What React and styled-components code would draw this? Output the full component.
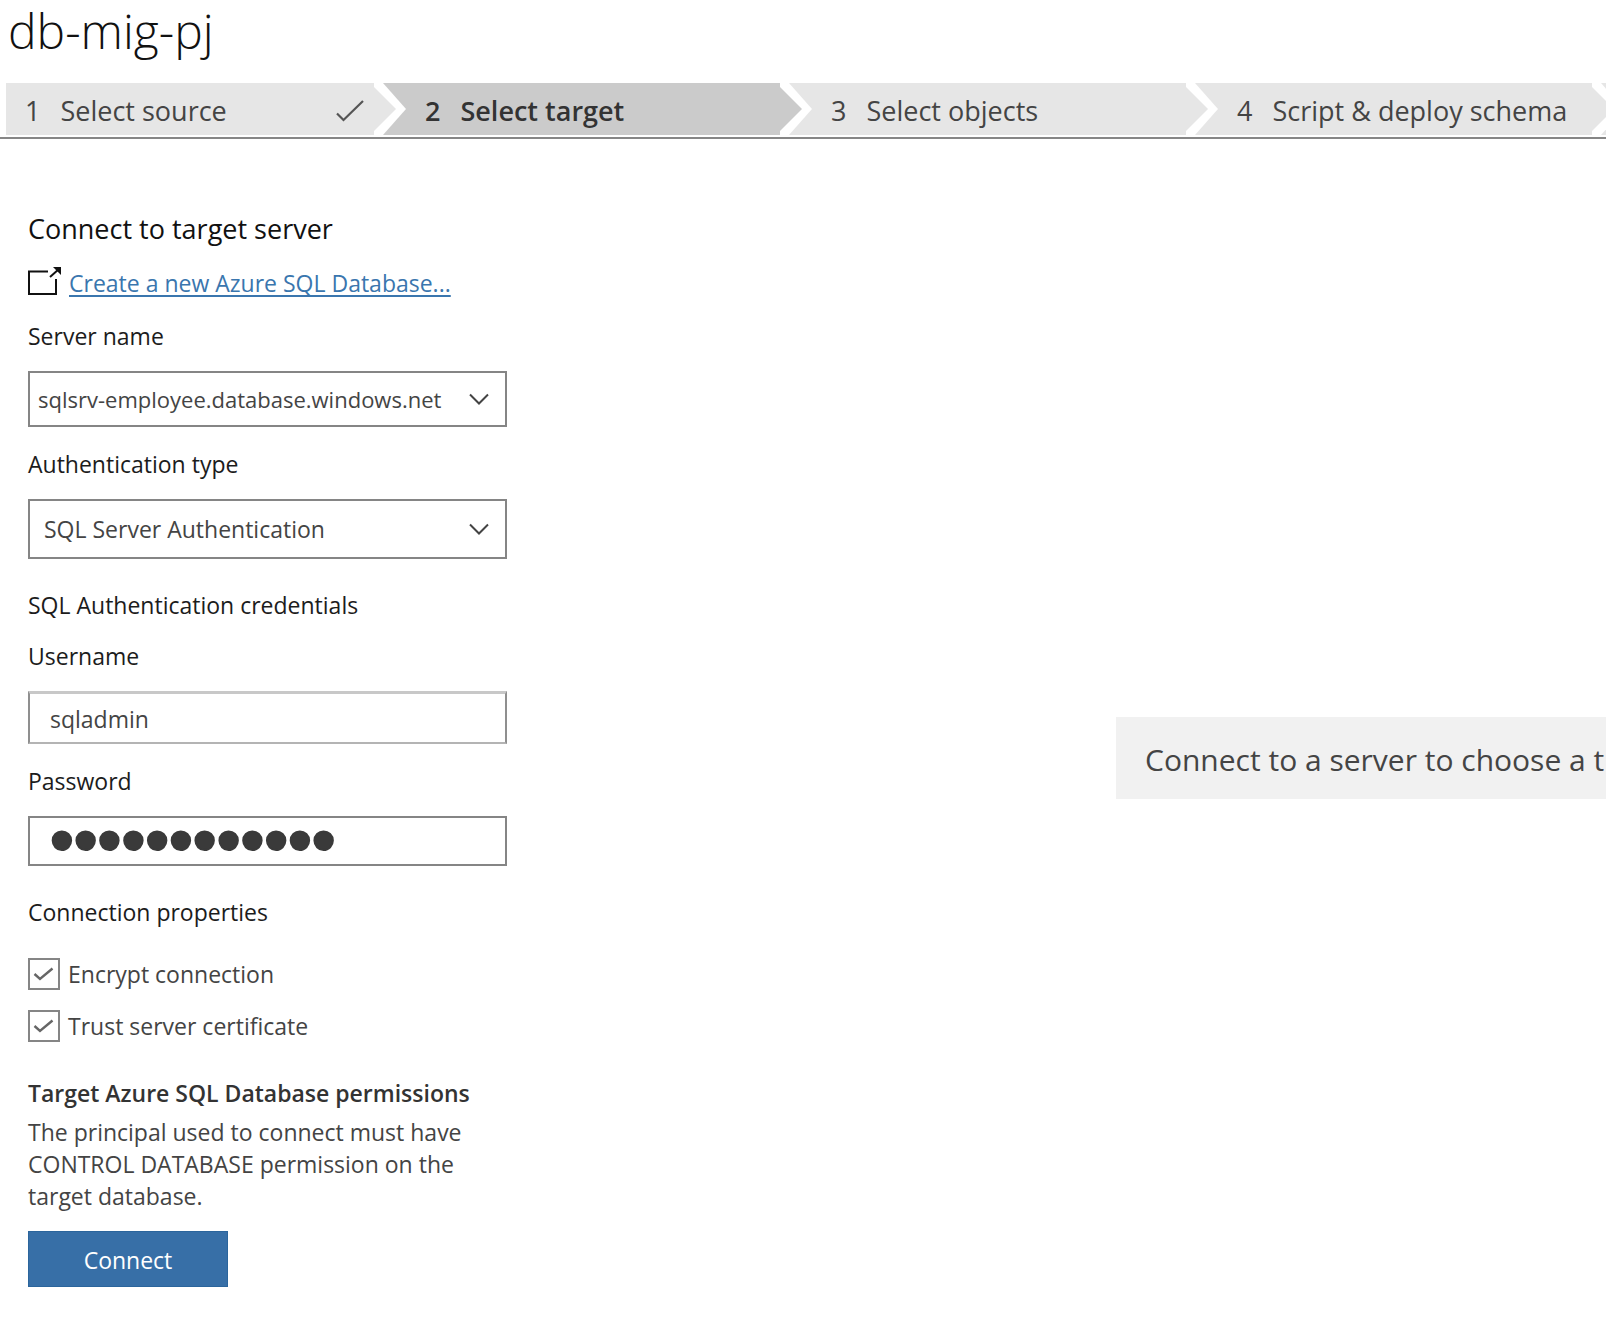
import { useState } from "react";
import styled, { createGlobalStyle } from "styled-components";

const steps = [
  { title: "Select source", done: true },
  { title: "Select target", active: true },
  { title: "Select objects" },
  { title: "Script & deploy schema" },
];

const stepColor = (step) => (step && step.active ? "#cbcbcb" : "#e6e6e6");

const StepArrow = ({ from, to }) => (
  <Arrow viewBox="0 0 32 52" aria-hidden="true">
    <rect width="32" height="52" fill={to} />
    <polygon points="0,0 9,0 32,26 9,52 0,52" fill="#fff" />
    <polygon points="0,4 22,26 0,48" fill={from} />
  </Arrow>
);

const Dropdown = ({ id, label, options, compact }) => (
  <Field>
    <Label htmlFor={id}>{label}</Label>
    <SelectBox>
      <Select id={id} $compact={compact}>
        {options.map((option) => (
          <option key={option}>{option}</option>
        ))}
      </Select>
      <Chevron viewBox="0 0 20 12" aria-hidden="true">
        <path d="M1 1.5 L10 10.5 L19 1.5" />
      </Chevron>
    </SelectBox>
  </Field>
);

const CheckOption = ({ label, checked, onChange }) => (
  <CheckLabel>
    <CheckBox>
      <input
        type="checkbox"
        checked={checked}
        onChange={(e) => onChange(e.target.checked)}
      />
      {checked && (
        <svg viewBox="0 0 32 32" aria-hidden="true">
          <path d="M6.5 16 L12 21 L24.5 10.5" />
        </svg>
      )}
    </CheckBox>
    {label}
  </CheckLabel>
);

const App = () => {
  const [username, setUsername] = useState("sqladmin");
  const [password, setPassword] = useState("password1234");
  const [encrypt, setEncrypt] = useState(true);
  const [trust, setTrust] = useState(true);

  return (
    <Page>
      <GlobalStyle />
      <ProjectName>db-mig-pj</ProjectName>
      <StepBar>
        {steps.map((step, i) => (
          <Step key={step.title} $first={i === 0}>
            <StepBody $color={stepColor(step)} $active={step.active}>
              <span>{i + 1}</span>
              <StepTitle>{step.title}</StepTitle>
              {step.done && (
                <DoneMark viewBox="0 0 28 22" aria-hidden="true">
                  <path d="M1 13.5 L7.5 20 L27 1" />
                </DoneMark>
              )}
            </StepBody>
            <StepArrow from={stepColor(step)} to={stepColor(steps[i + 1])} />
          </Step>
        ))}
      </StepBar>
      <Main>
        <Form onSubmit={(e) => e.preventDefault()}>
          <Heading>Connect to target server</Heading>
          <LinkRow>
            <NewWindowIcon viewBox="0 0 34 30" aria-hidden="true">
              <path d="M20 4.5 H1 V27 H28 V12" />
              <path d="M22 10 L31 2" />
              <path className="head" d="M25 0 H33 V8 Z" />
            </NewWindowIcon>
            <Link href="#create">Create a new Azure SQL Database...</Link>
          </LinkRow>
          <Dropdown
            id="server"
            label="Server name"
            options={["sqlsrv-employee.database.windows.net"]}
            compact
          />
          <Dropdown
            id="auth"
            label="Authentication type"
            options={["SQL Server Authentication", "Windows Authentication"]}
          />
          <SectionTitle>SQL Authentication credentials</SectionTitle>
          <Field>
            <Label htmlFor="username">Username</Label>
            <TextInput
              id="username"
              type="text"
              value={username}
              onChange={(e) => setUsername(e.target.value)}
            />
          </Field>
          <Field>
            <Label htmlFor="password">Password</Label>
            <PasswordInput
              id="password"
              type="password"
              value={password}
              onChange={(e) => setPassword(e.target.value)}
            />
          </Field>
          <SectionTitle>Connection properties</SectionTitle>
          <Checks>
            <CheckOption
              label="Encrypt connection"
              checked={encrypt}
              onChange={setEncrypt}
            />
            <CheckOption
              label="Trust server certificate"
              checked={trust}
              onChange={setTrust}
            />
          </Checks>
          <NoteTitle>Target Azure SQL Database permissions</NoteTitle>
          <Note>
            The principal used to connect must have CONTROL DATABASE permission
            on the target database.
          </Note>
          <ConnectButton type="submit">Connect</ConnectButton>
        </Form>
        <Pane>
          <Banner>Connect to a server to choose a t</Banner>
        </Pane>
      </Main>
    </Page>
  );
};
export default App;

const GlobalStyle = createGlobalStyle`
  * {
    box-sizing: border-box;
  }
  body {
    margin: 0;
    background: #fff;
    color: #444;
    font-family: "Open Sans", "Noto Sans", sans-serif;
    font-size: 23px;
    line-height: 32px;
  }
  h1, h2, h3, p {
    margin: 0;
  }
  input, select, button {
    margin: 0;
    font-family: inherit;
    color: inherit;
  }
`;

const Page = styled.div`
  display: flex;
  flex-direction: column;
  min-height: 100vh;
  overflow-x: clip;
`;

const ProjectName = styled.h1`
  padding-left: 8px;
  margin-bottom: 21px;
  color: #111;
  font-size: 48px;
  font-weight: 300;
  line-height: 62px;
`;

const StepBar = styled.nav`
  display: flex;
  padding: 0 0 2px 6px;
  border-bottom: 2px solid #868686;
`;

const Step = styled.div`
  display: flex;
  flex: 0 0 ${(props) => (props.$first ? "400px" : "406px")};
`;

const StepBody = styled.div`
  display: flex;
  flex: 1;
  align-items: center;
  gap: 20px;
  height: 52px;
  padding: 4px 10px 0 19px;
  background: ${(props) => props.$color};
  color: ${(props) => (props.$active ? "#333" : "#444")};
  font-size: 27px;
  font-weight: ${(props) => (props.$active ? 600 : 400)};
  white-space: nowrap;
`;

const StepTitle = styled.span`
  flex: 1;
`;

const DoneMark = styled.svg`
  width: 28px;
  height: 22px;
  fill: none;
  stroke: #555;
  stroke-width: 2.2;
`;

const Arrow = styled.svg`
  flex: none;
  width: 32px;
  height: 52px;
`;

const Main = styled.main`
  display: flex;
  flex: 1;
  padding-left: 28px;
`;

const Form = styled.form`
  flex: 0 0 479px;
  padding: 70px 0 50px;
`;

const Heading = styled.h2`
  margin-bottom: 18px;
  color: #111;
  font-size: 27px;
  font-weight: 400;
  line-height: 40px;
`;

const LinkRow = styled.div`
  display: flex;
  gap: 7px;
  margin-bottom: 21px;
`;

const NewWindowIcon = styled.svg`
  flex: none;
  width: 34px;
  height: 30px;
  fill: none;
  stroke: #111;
  stroke-width: 2;
  .head {
    fill: #111;
    stroke: none;
  }
`;

const Link = styled.a`
  color: #3a76ae;
  text-decoration: underline;
  text-decoration-thickness: 2px;
  text-underline-offset: 3px;
  text-decoration-skip-ink: none;
`;

const Field = styled.div`
  margin-bottom: 21px;
`;

const Label = styled.label`
  display: block;
  margin-bottom: 19px;
  color: #1c1c1c;
`;

const SelectBox = styled.div`
  display: grid;
  align-items: center;
  > * {
    grid-area: 1 / 1;
  }
`;

const Select = styled.select`
  appearance: none;
  width: 100%;
  height: ${(props) => (props.$compact ? "56px" : "60px")};
  padding: 0 40px 0 ${(props) => (props.$compact ? "8px" : "14px")};
  border: 2px solid #858585;
  border-radius: 0;
  background: #fff;
  font-size: ${(props) => (props.$compact ? "22px" : "23px")};
`;

const Chevron = styled.svg`
  justify-self: end;
  width: 20px;
  height: 12px;
  margin-right: 18px;
  fill: none;
  stroke: #444;
  stroke-width: 2;
  pointer-events: none;
`;

const SectionTitle = styled.h3`
  margin: 30px 0 19px;
  color: #1c1c1c;
  font-size: 23px;
  font-weight: 400;
`;

const TextInput = styled.input`
  display: block;
  width: 100%;
  height: 53px;
  padding: 2px 20px 0;
  border: 2px solid #8f8f8f;
  border-top: 3px solid #c8c8c8;
  border-bottom-color: #b4b4b4;
  background: #fff;
  font-size: 23px;
`;

const PasswordInput = styled.input`
  display: block;
  width: 100%;
  height: 50px;
  padding: 0 20px 4px;
  border: 2px solid #858585;
  background: #fff;
  color: #3a3a3a;
  font-family: "Liberation Sans", sans-serif;
  font-size: 68px;
  line-height: 42px;
  -webkit-text-stroke: 2px #3a3a3a;
`;

const Checks = styled.div`
  display: flex;
  flex-direction: column;
  align-items: flex-start;
  gap: 20px;
  padding-top: 11px;
  margin-bottom: 35px;
`;

const CheckLabel = styled.label`
  display: flex;
  gap: 8px;
`;

const CheckBox = styled.span`
  display: grid;
  > * {
    grid-area: 1 / 1;
    width: 32px;
    height: 32px;
  }
  input {
    appearance: none;
    border: 2px solid #858585;
    background: #fff;
  }
  svg {
    fill: none;
    stroke: #666;
    stroke-width: 2.4;
    pointer-events: none;
  }
`;

const NoteTitle = styled.h3`
  margin-bottom: 7px;
  color: #333;
  font-size: 23px;
  font-weight: 600;
  white-space: nowrap;
`;

const Note = styled.p`
  max-width: 440px;
  margin-bottom: 19px;
`;

const ConnectButton = styled.button`
  width: 200px;
  height: 56px;
  padding: 2px 0 0;
  border: 1px solid #2b659c;
  background: #376fa7;
  color: #fff;
  font-size: 23px;
`;

const Pane = styled.section`
  display: flex;
  flex: 1;
  align-items: center;
  justify-content: flex-end;
  padding-top: 39px;
`;

const Banner = styled.div`
  flex: 0 0 490px;
  padding: 23px 0 19px 29px;
  background: #f1f1f1;
  font-size: 30px;
  line-height: 40px;
  white-space: nowrap;
`;
